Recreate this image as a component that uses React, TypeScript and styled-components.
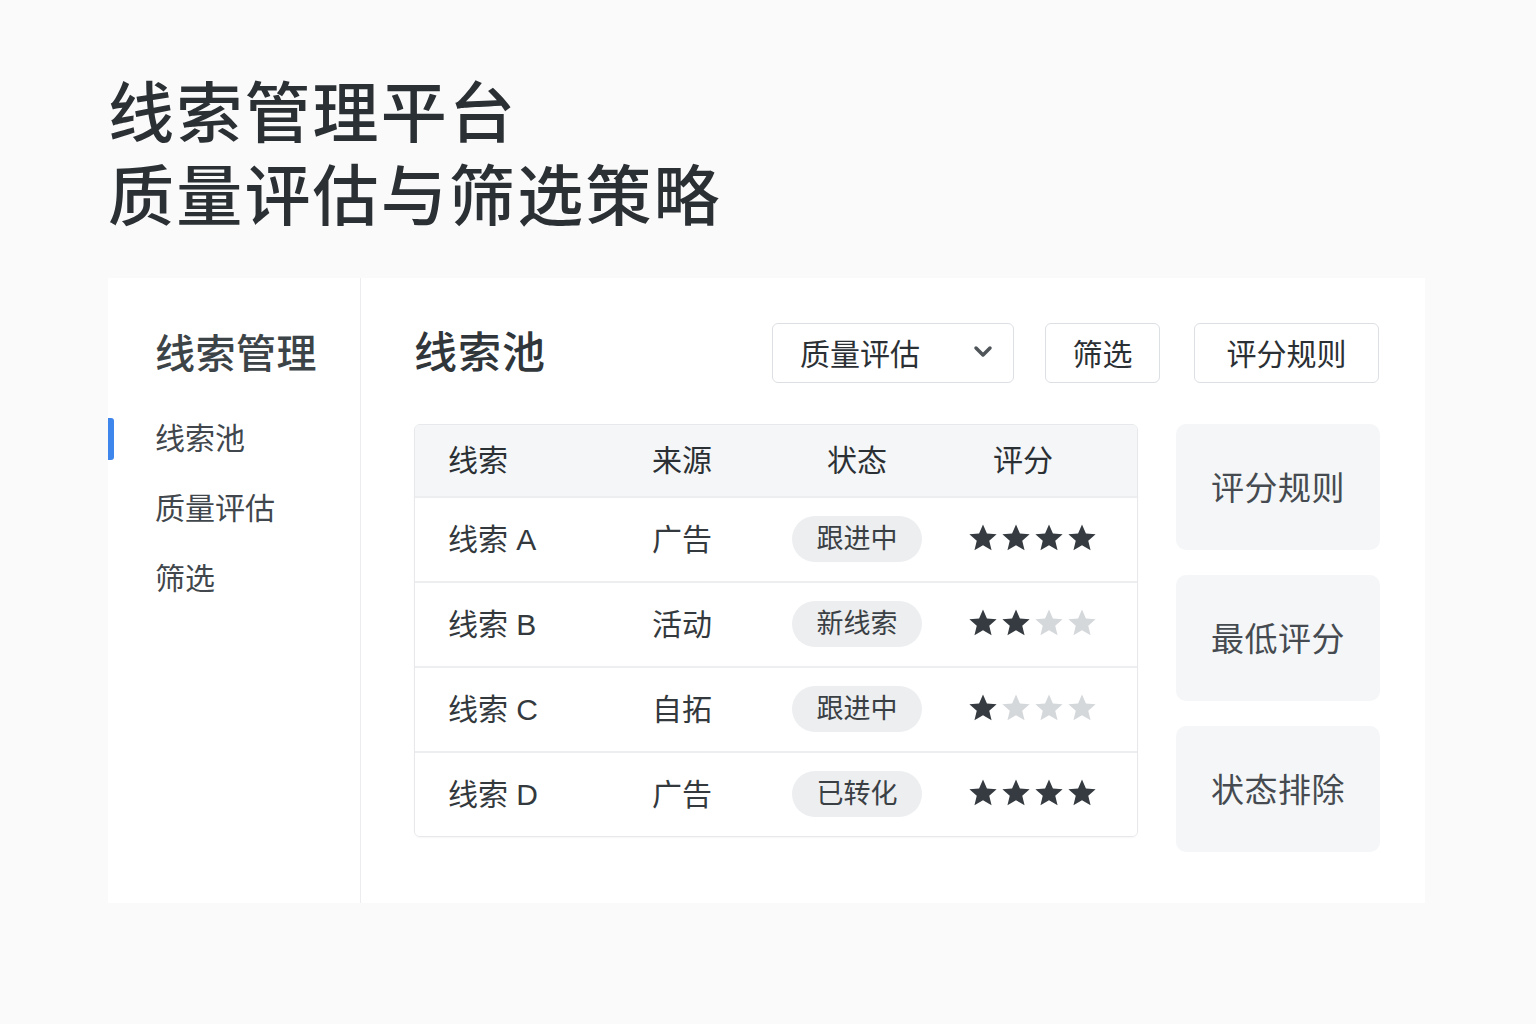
import React from "react";
import styled, { createGlobalStyle } from "styled-components";

const Global = createGlobalStyle`
  html, body { margin: 0; padding: 0; background: #fafafa; }
  body {
    font-family: "Liberation Sans", "Noto Sans CJK SC", sans-serif;
    color: #2d3337;
  }
  #root { width: 1536px; height: 1024px; }
`;

const Page = styled.div`
  width: 1536px;
  height: 1024px;
  box-sizing: border-box;
  padding: 73px 0 0 108px;
  background: #fafafa;
  overflow: hidden;
`;

const Title = styled.h1`
  margin: 0;
  font-size: 66px;
  line-height: 83px;
  font-weight: 500;
  letter-spacing: 2.2px;
  color: #2b3034;
`;

const Panel = styled.div`
  margin-top: 39px;
  width: 1317px;
  height: 625px;
  background: #ffffff;
  display: flex;
`;

const Sidebar = styled.nav`
  width: 253px;
  flex: none;
  border-right: 1px solid #ececee;
  display: flex;
  flex-direction: column;
  padding-top: 52px;
  box-sizing: border-box;
`;

const SideHeading = styled.div`
  font-size: 40px;
  line-height: 48px;
  font-weight: 500;
  color: #3d4448;
  padding-left: 47px;
  margin-bottom: 40px;
  letter-spacing: 0.5px;
`;

const NavItem = styled.div<{ $active?: boolean }>`
  position: relative;
  font-size: 30px;
  line-height: 42px;
  color: #41474c;
  padding-left: 47px;
  margin-bottom: 28px;
  &::before {
    content: "";
    display: ${(p) => (p.$active ? "block" : "none")};
    position: absolute;
    left: 0;
    top: 0;
    width: 6px;
    height: 42px;
    border-radius: 0 3px 3px 0;
    background: #3f86ec;
  }
`;

const Main = styled.main`
  flex: 1;
  padding: 45px 0 0 53px;
  box-sizing: border-box;
`;

const Toolbar = styled.div`
  width: 965px;
  height: 60px;
  display: flex;
  align-items: center;
`;

const Heading = styled.h2`
  margin: 0 0 8px 0;
  font-size: 43px;
  font-weight: 500;
  letter-spacing: 1px;
  color: #30363a;
  flex: 1;
`;

const Button = styled.button<{ $w: number; $ml: number }>`
  width: ${(p) => p.$w}px;
  margin-left: ${(p) => p.$ml}px;
  height: 60px;
  box-sizing: border-box;
  background: #ffffff;
  border: 1.5px solid #dcdfe3;
  border-radius: 6px;
  font-family: inherit;
  font-size: 30px;
  color: #2b3034;
  display: flex;
  align-items: center;
  justify-content: center;
  padding: 0 0 3px 0;
`;

const SelectButton = styled(Button)`
  justify-content: space-between;
  padding: 0 20px 3px 27px;
`;

const Content = styled.div`
  margin-top: 41px;
  display: flex;
  gap: 38px;
  align-items: flex-start;
`;

const Table = styled.div`
  width: 724px;
  border: 1.5px solid #e6e8eb;
  border-radius: 6px;
  box-sizing: border-box;
  overflow: hidden;
  box-shadow: 0 1px 2px rgba(0, 0, 0, 0.04);
`;

const Row = styled.div<{ $head?: boolean }>`
  display: grid;
  grid-template-columns: 237px 140px 130px 1fr;
  align-items: center;
  height: ${(p) => (p.$head ? 71 : 85)}px;
  padding-bottom: 5px;
  background: ${(p) => (p.$head ? "#f5f6f7" : "#ffffff")};
  border-top: ${(p) => (p.$head ? "none" : "2px solid #eceef0")};
  box-sizing: border-box;
  font-size: 30px;
  color: ${(p) => (p.$head ? "#2b3034" : "#33393d")};
`;

const Cell = styled.div<{ $align?: "left" | "center"; $pl?: number }>`
  text-align: ${(p) => p.$align || "left"};
  padding-left: ${(p) => p.$pl || 0}px;
  display: flex;
  justify-content: ${(p) => (p.$align === "center" ? "center" : "flex-start")};
`;

const Badge = styled.span`
  width: 130px;
  height: 46px;
  margin-top: 3px;
  border-radius: 23px;
  background: #eceef0;
  font-size: 27px;
  line-height: 46px;
  text-align: center;
  color: #3a4044;
`;

const Stars = styled.div`
  display: flex;
  gap: 3px;
  padding-left: 46px;
  margin-top: 2px;
`;

const Side = styled.div`
  display: flex;
  flex-direction: column;
  gap: 25px;
`;

const Card = styled.div`
  width: 204px;
  height: 126px;
  border-radius: 10px;
  background: #f5f6f7;
  display: flex;
  align-items: center;
  justify-content: center;
  font-size: 33px;
  color: #454b50;
  letter-spacing: 0.5px;
  padding-bottom: 3px;
  box-sizing: border-box;
`;

const Star = ({ on }: { on: boolean }) => (
  <svg width="30" height="30" viewBox="0 0 24 24">
    <path
      d="M12 1.2l3.15 7.2 7.75.65-5.9 5.05 1.85 7.65L12 17.8l-6.85 3.95 1.85-7.65-5.9-5.05 7.75-.65z"
      fill={on ? "#353b40" : "#d5d8db"}
    />
  </svg>
);

const Chevron = () => (
  <svg width="20" height="14" viewBox="0 0 20 14">
    <polyline
      points="3,3 10,10 17,3"
      fill="none"
      stroke="#4f5559"
      strokeWidth="3.5"
      strokeLinecap="round"
      strokeLinejoin="round"
    />
  </svg>
);

const rows = [
  { name: "线索 A", src: "广告", status: "跟进中", score: 4 },
  { name: "线索 B", src: "活动", status: "新线索", score: 2 },
  { name: "线索 C", src: "自拓", status: "跟进中", score: 1 },
  { name: "线索 D", src: "广告", status: "已转化", score: 4 },
];

export default function App() {
  return (
    <Page>
      <Global />
      <Title>
        线索管理平台
        <br />
        质量评估与筛选策略
      </Title>
      <Panel>
        <Sidebar>
          <SideHeading>线索管理</SideHeading>
          <NavItem $active>线索池</NavItem>
          <NavItem>质量评估</NavItem>
          <NavItem>筛选</NavItem>
        </Sidebar>
        <Main>
          <Toolbar>
            <Heading>线索池</Heading>
            <SelectButton $w={242} $ml={0}>
              <span>质量评估</span>
              <Chevron />
            </SelectButton>
            <Button $w={115} $ml={31}>筛选</Button>
            <Button $w={185} $ml={34}>评分规则</Button>
          </Toolbar>
          <Content>
            <Table>
              <Row $head>
                <Cell $pl={33}>线索</Cell>
                <Cell>来源</Cell>
                <Cell $align="center">状态</Cell>
                <Cell $pl={71}>评分</Cell>
              </Row>
              {rows.map((r) => (
                <Row key={r.name}>
                  <Cell $pl={33}>{r.name}</Cell>
                  <Cell>{r.src}</Cell>
                  <Cell $align="center">
                    <Badge>{r.status}</Badge>
                  </Cell>
                  <Stars>
                    {[0, 1, 2, 3].map((i) => (
                      <Star key={i} on={i < r.score} />
                    ))}
                  </Stars>
                </Row>
              ))}
            </Table>
            <Side>
              <Card>评分规则</Card>
              <Card>最低评分</Card>
              <Card>状态排除</Card>
            </Side>
          </Content>
        </Main>
      </Panel>
    </Page>
  );
}
